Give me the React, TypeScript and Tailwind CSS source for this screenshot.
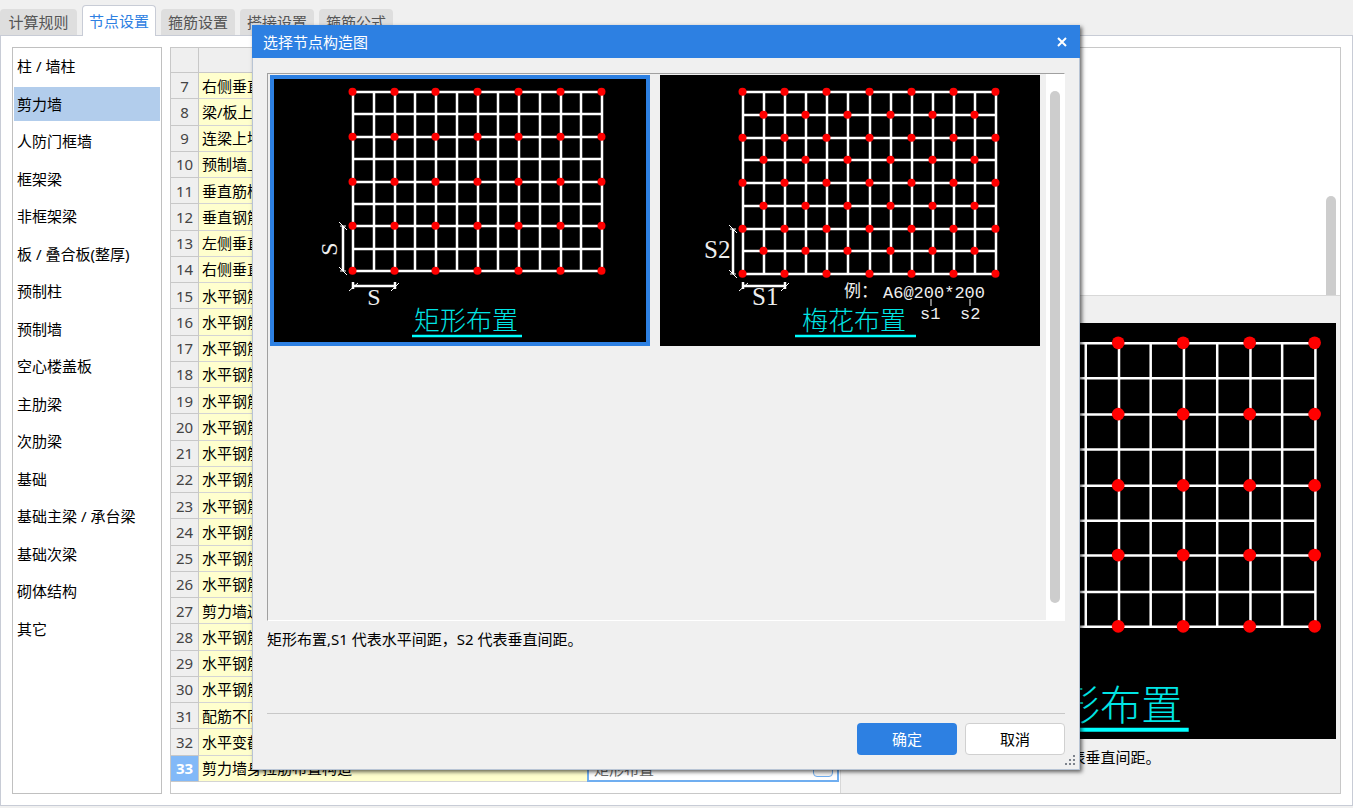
import { useState } from 'react';
import clsx from 'clsx';

const tabs = ['计算规则', '节点设置', '箍筋设置', '搭接设置', '箍筋公式'];

const categories = [
  '柱 / 墙柱',
  '剪力墙',
  '人防门框墙',
  '框架梁',
  '非框架梁',
  '板 / 叠合板(整厚)',
  '预制柱',
  '预制墙',
  '空心楼盖板',
  '主肋梁',
  '次肋梁',
  '基础',
  '基础主梁 / 承台梁',
  '基础次梁',
  '砌体结构',
  '其它',
];

const rows = [
  { no: 7, name: '右侧垂直' },
  { no: 8, name: '梁/板上' },
  { no: 9, name: '连梁上墙' },
  { no: 10, name: '预制墙上' },
  { no: 11, name: '垂直筋楼' },
  { no: 12, name: '垂直钢筋' },
  { no: 13, name: '左侧垂直' },
  { no: 14, name: '右侧垂直' },
  { no: 15, name: '水平钢筋' },
  { no: 16, name: '水平钢筋' },
  { no: 17, name: '水平钢筋' },
  { no: 18, name: '水平钢筋' },
  { no: 19, name: '水平钢筋' },
  { no: 20, name: '水平钢筋' },
  { no: 21, name: '水平钢筋' },
  { no: 22, name: '水平钢筋' },
  { no: 23, name: '水平钢筋' },
  { no: 24, name: '水平钢筋' },
  { no: 25, name: '水平钢筋' },
  { no: 26, name: '水平钢筋' },
  { no: 27, name: '剪力墙边' },
  { no: 28, name: '水平钢筋' },
  { no: 29, name: '水平钢筋' },
  { no: 30, name: '水平钢筋' },
  { no: 31, name: '配筋不同' },
  { no: 32, name: '水平变截' },
  { no: 33, name: '剪力墙身拉筋布置构造' },
];

const description = '矩形布置,S1 代表水平间距，S2 代表垂直间距。';

const range = (n: number) => Array.from({ length: n }, (_, i) => i);

type MeshProps = { width: number; height: number; staggered?: boolean };

// 12 x 8 cells of wall mesh, ties drawn as red dots
const Mesh = ({ width, height, staggered = false }: MeshProps) => {
  const x = (i: number) => Math.round(83 + (width * i) / 12);
  const y = (j: number) => Math.round(17 + (height * j) / 8);
  const hasTie = (i: number, j: number) =>
    staggered ? i % 2 === j % 2 : i % 2 === 0 && j % 2 === 0;

  return (
    <>
      <g stroke="#fff" strokeWidth="2.5">
        {range(13).map((i) => (
          <line key={`v${i}`} x1={x(i)} x2={x(i)} y1={y(0)} y2={y(8)} vectorEffect="non-scaling-stroke" />
        ))}
        {range(9).map((j) => (
          <line key={`h${j}`} x1={x(0)} x2={x(12)} y1={y(j)} y2={y(j)} vectorEffect="non-scaling-stroke" />
        ))}
      </g>
      <g fill="#f00">
        {range(9).map((j) =>
          range(13)
            .filter((i) => hasTie(i, j))
            .map((i) => <circle key={`${i}-${j}`} cx={x(i) - 0.5} cy={y(j) - 0.3} r="4" />)
        )}
      </g>
      {/* Dimension marks */}
      <g stroke="#fff" fill="none">
        <path strokeWidth="2.5" d={`M73 ${y(6)}V${y(8)}M83 211H${x(2)}M83 207v7M${x(2)} 207v7`} />
        <path
          strokeWidth="1"
          d={`M69 ${y(6) - 4}l8 8M70 ${y(6)}h6M69 ${y(8) - 4}l8 8M70 ${y(8)}h6M79 216l9 -8M${x(2) - 4} 216l8 -8`}
        />
      </g>
    </>
  );
};

const captionFont = 'font-["Noto_Sans_CJK_SC",sans-serif] font-light';
const dimFont = 'font-["Liberation_Serif",serif]';
const monoFont = 'font-["Liberation_Mono","Noto_Sans_CJK_SC",monospace]';

const RectDrawing = () => (
  <>
    <Mesh width={249} height={179} />
    <text x="104" y="230" fontSize="24" fill="#eee" textAnchor="middle" className={dimFont}>S</text>
    <text x="67" y="174" fontSize="24" fill="#eee" textAnchor="middle" transform="rotate(-90 67 174)" className={dimFont}>S</text>
    <text x="144" y="255" fontSize="26" fill="#00e5e5" className={captionFont}>矩形布置</text>
    <path d="M142 261H252" stroke="#0ff" strokeWidth="2.5" />
  </>
);

const StaggeredDrawing = () => (
  <>
    <Mesh width={253} height={182} staggered />
    <text x="44" y="183" fontSize="25" fill="#eee" className={dimFont}>S2</text>
    <text x="92" y="230" fontSize="25" fill="#eee" className={dimFont}>S1</text>
    <g fontSize="17" fill="#eee" className={monoFont}>
      <text x="184" y="222">例：</text>
      <text x="223" y="223">A6@200*200</text>
      <text x="260" y="244">s1</text>
      <text x="300" y="244">s2</text>
    </g>
    <path d="M271 224v7M310 224v7" stroke="#fff" />
    <text x="142" y="255" fontSize="26" fill="#00e5e5" className={captionFont}>梅花布置</text>
    <path d="M135 261H256" stroke="#0ff" strokeWidth="2.5" />
  </>
);

const options = [
  { id: 'rect', label: '矩形布置', Drawing: RectDrawing },
  { id: 'staggered', label: '梅花布置', Drawing: StaggeredDrawing },
];

const NodeDialog = () => {
  const [selected, setSelected] = useState('rect');

  return (
    <div className="absolute inset-0 flex items-start justify-center pt-[25px] pr-[21px]">
      <div
        role="dialog"
        aria-labelledby="dialog-title"
        className="flex h-[745px] w-[828px] flex-col bg-[#f0f0f0] shadow-[2px_2px_4px_0_rgba(0,0,0,0.6)]"
      >
        <div className="flex h-[33px] shrink-0 items-center justify-between bg-[#2d80e2] pr-3 pl-[11px] text-white">
          <h2 id="dialog-title">选择节点构造图</h2>
          <button type="button" aria-label="Close" className="p-px">
            <svg className="size-[10px]" viewBox="0 0 10 10" fill="none" stroke="currentColor" strokeWidth="2">
              <path d="M1 1l8 8M9 1l-8 8" />
            </svg>
          </button>
        </div>

        <div className="relative flex flex-1 flex-col border-x border-b border-[#b8c4d4] px-[14px] pt-[15px]">
          {/* Drawing picker */}
          <div className="flex h-[548px] border border-t-[#a0a0a0] border-r-white border-b-white border-l-[#a0a0a0]">
            <div className="flex flex-1 items-start gap-[10px] pt-px pl-[2px]">
              {options.map(({ id, label, Drawing }) => (
                <button
                  key={id}
                  type="button"
                  aria-label={label}
                  aria-pressed={selected === id}
                  onClick={() => setSelected(id)}
                  className={clsx(
                    'bg-black',
                    selected === id && 'outline-4 -outline-offset-4 outline-[#2d80e2]'
                  )}
                >
                  <svg className="block h-[271px] w-[380px]" viewBox="0 0 380 271">
                    <Drawing />
                  </svg>
                </button>
              ))}
            </div>
            <div className="w-[18px] bg-white px-1 pt-[17px]">
              <div className="h-[512px] rounded-full bg-[#cdcdcd]" />
            </div>
          </div>

          <p className="mt-[6px] leading-6">{description}</p>

          <div className="mt-auto flex justify-end gap-2 border-t border-[#c8c8c8] pt-[9px] pb-[14px]">
            <button type="button" className="h-8 w-[100px] rounded-sm bg-[#2d80e2] text-white">
              确定
            </button>
            <button type="button" className="h-8 w-[100px] rounded-sm border border-[#d0d0d0] bg-white text-black">
              取消
            </button>
          </div>

          <svg className="absolute right-[3px] bottom-[3px] size-[11px]" viewBox="0 0 11 11" fill="#7d838c">
            <path d="M8 0h2v2h-2zM4 4h2v2h-2zM8 4h2v2h-2zM0 8h2v2h-2zM4 8h2v2h-2zM8 8h2v2h-2z" />
          </svg>
        </div>
      </div>
    </div>
  );
};

const App = () => {
  const [activeTab, setActiveTab] = useState('节点设置');
  const [category, setCategory] = useState('剪力墙');

  return (
    <div className='relative flex min-h-screen flex-col bg-[#f0f0f0] pb-[2px] font-["Noto_Sans","Noto_Sans_CJK_SC",sans-serif] text-[15px] leading-5 text-black'>
      {/* Tabs */}
      <div role="tablist" className="flex h-9 items-end gap-[5px]">
        {tabs.map((tab) => (
          <button
            key={tab}
            type="button"
            role="tab"
            aria-selected={activeTab === tab}
            onClick={() => setActiveTab(tab)}
            className={clsx(
              'w-[74px] rounded-t whitespace-nowrap first:w-[77px]',
              activeTab === tab
                ? 'z-10 h-[31px] border border-b-0 border-[#c8ccd6] bg-white text-[#2d80e2]'
                : 'mb-px h-[26px] bg-[#dedede] text-[#555]'
            )}
          >
            {tab}
          </button>
        ))}
      </div>

      <div className="-mt-px flex flex-1 gap-2 border border-[#c8ccd6] bg-white p-[11px]">
        {/* Component categories */}
        <ul className="grid h-[747px] w-[150px] shrink-0 auto-rows-fr gap-y-[3px] border border-[#c0c0c0] px-px pt-px pb-[147px]">
          {categories.map((item) => (
            <li key={item} className="flex">
              <button
                type="button"
                onClick={() => setCategory(item)}
                className={clsx(
                  'w-full pl-[3px] text-left whitespace-nowrap',
                  category === item && 'bg-[#b2cdec]'
                )}
              >
                {item}
              </button>
            </li>
          ))}
        </ul>

        <div className="flex flex-1 border border-[#c8c8c8]">
          {/* Node settings */}
          <div className="w-[670px] shrink-0 border-r border-[#d8d8d8]">
            <table className="h-[734px] w-[668px] table-fixed border-separate border-spacing-0">
              <colgroup>
                <col className="w-7" />
                <col className="w-[388px]" />
                <col />
              </colgroup>
              <thead>
                <tr className="h-[25px] bg-[#efefef]">
                  <th className="border-r border-b border-[#c8c8c8]" />
                  <th className="border-r border-b border-[#c8c8c8]" />
                  <th className="border-b border-[#c8c8c8]" />
                </tr>
              </thead>
              <tbody>
                {rows.map(({ no, name }) => (
                  <tr key={no}>
                    <th
                      scope="row"
                      className={clsx(
                        'border-r border-b border-[#c8c8c8] p-0',
                        no === 33 ? 'bg-[#82b9f8] font-bold text-white' : 'bg-[#efefef] font-normal text-[#444]'
                      )}
                    >
                      {no}
                    </th>
                    <td className="border-b border-[#d4d4d4] bg-[#ffffcd] p-0 pl-[3px]">{name}</td>
                    {no === 33 ? (
                      <td className="border-2 border-[#70aef0] bg-white p-0">
                        <div className="flex h-4 items-center pr-1 pl-[5px]">
                          <input
                            aria-label={name}
                            defaultValue="矩形布置"
                            className="min-w-0 flex-1 text-[#666] outline-none"
                          />
                          <button
                            type="button"
                            aria-label="More"
                            className="h-4 w-5 rounded border border-[#70aef0] bg-[#f4f4f4]"
                          />
                        </div>
                      </td>
                    ) : (
                      <td className="border-b border-[#d4d4d4] p-0" />
                    )}
                  </tr>
                ))}
              </tbody>
            </table>
          </div>

          {/* Preview of the current node */}
          <div className="flex min-w-0 flex-1 flex-col">
            <div className="flex h-[248px] items-end justify-end border-b border-[#d8d8d8] bg-white pr-1">
              <div className="h-[99px] w-[10px] rounded-t-full bg-[#cdcdcd]" />
            </div>
            <div className="flex-1 bg-[#f0f0f0] px-1 pt-[27px]">
              <svg
                className="block h-[416px] w-full bg-black"
                viewBox="35 4 310 263"
                preserveAspectRatio="xMaxYMid slice"
              >
                <RectDrawing />
              </svg>
              <p className="mt-[6px] leading-6 whitespace-nowrap">{description}</p>
            </div>
          </div>
        </div>
      </div>

      <NodeDialog />
    </div>
  );
};

export default App;
